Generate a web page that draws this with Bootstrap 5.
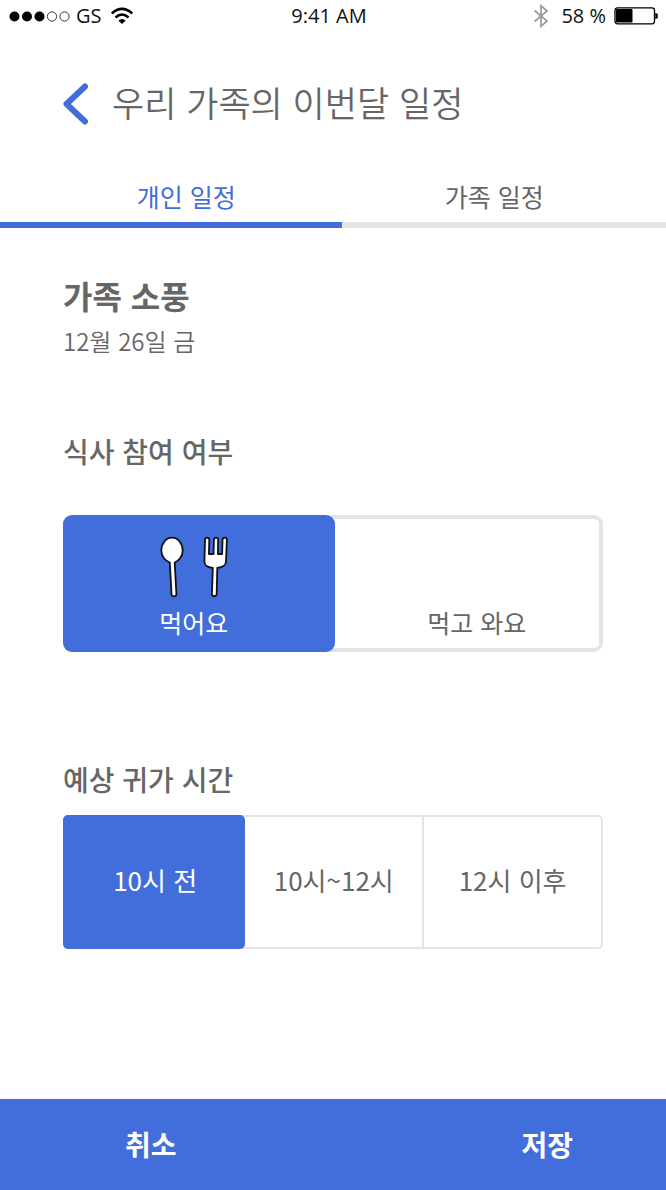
<!DOCTYPE html>
<html lang="ko">
<head>
<meta charset="utf-8">
<meta name="viewport" content="width=device-width, initial-scale=1">
<title>우리 가족의 이번달 일정</title>
<link href="https://cdn.jsdelivr.net/npm/bootstrap@5.3.0/dist/css/bootstrap.min.css" rel="stylesheet">
<style>
:root { --brand: #416edb; --ink: #666; --line: #e4e4e4; }
body { font-family: "Noto Sans CJK KR", sans-serif; color: var(--ink); background: #fff; line-height: 1.5; }
.status { font-family: "Open Sans", "Noto Sans CJK KR", sans-serif; font-size: 20px; line-height: 32px; color: #111; padding: 0 8px; }
.status > div { flex: 1 1 0; }
.status .clock { padding-right: 8px; }
.topbar { padding: 44px 63px 0; gap: 24px; }
.topbar h1 { font-size: 35px; font-weight: 350; line-height: 52px; padding-bottom: 4px; }
.back { line-height: 0; }
.tabs { margin-top: 44px; }
.tabs button { font-size: 25px; font-weight: 400; line-height: 40px; padding: 0 20px 6px 0; flex: 0 0 48.6%; color: var(--ink); border: 0; border-bottom: 6px solid var(--line); background: none; }
.tabs button.active { flex: 1 1 0; padding: 0 0 6px 30px; color: var(--brand); border-color: var(--brand); }
.content { padding: 43px 63px 56px; }
.event-name { font-size: 32px; font-weight: 700; line-height: 48px; }
.event-date { font-size: 24px; font-weight: 350; line-height: 44px; }
.section-title { font-size: 28px; font-weight: 500; line-height: 40px; }
.event { margin-bottom: 68px; }
.meal { margin-bottom: 107px; }
.choices { border: 2px solid var(--line); border-radius: 5px; font-size: 26px; }
.choices.thick { border-width: 4px; border-radius: 9px; font-size: 25px; margin-top: 44px; }
.choices label { flex: 1 1 0; cursor: pointer; height: 130px; line-height: 32px; padding-bottom: 4px; border-left: 2px solid var(--line); }
.choices.thick label { height: 129px; border-left: 0; padding: 0 0 10px 24px; }
.choices .btn-check:checked + label { position: relative; background: var(--brand); border-color: var(--brand); color: #fff; border-radius: 5px; margin: -2px; height: 134px; padding-bottom: 4px; flex-grow: 1.02; }
.choices.thick .btn-check:checked + label { border-radius: 9px; margin: -4px; height: 137px; padding: 0 10px 14px 0; flex-grow: 1.07; }
.choices .btn-check:checked + label + input + label { border-left-color: transparent; }
.btn-check:focus-visible + label { outline: 3px solid #9db7f5; }
.actions { background: var(--brand); padding: 0 93px 0 125px; }
.actions button { color: #fff; font-size: 28px; font-weight: 700; line-height: 91px; }
</style>
</head>
<body class="d-flex flex-column min-vh-100">
<div class="status d-flex align-items-center">
  <div class="d-flex align-items-center">
    <svg width="64" height="16" viewBox="0 0 64 16" aria-hidden="true">
      <g fill="#000"><circle cx="6.5" cy="8.500" r="5"/><circle cx="19" cy="8.500" r="5"/><circle cx="31.500" cy="8.500" r="5"/></g>
      <g fill="none" stroke="#333"><circle cx="44" cy="8.500" r="4.600"/><circle cx="56.500" cy="8.500" r="4.600"/></g>
    </svg>
    <span class="ms-1">GS</span>
    <svg class="ms-2" width="24" height="18" viewBox="0 0 24 18" aria-hidden="true">
      <g fill="none" stroke="#000" stroke-width="2.600"><path d="M1.800 6.500Q12-2.600 22.200 6.500"/><path d="M5.500 10.500Q12 4.500 18.500 10.500"/></g>
      <path d="M8.300 13.500Q12 10.400 15.700 13.500L12 17z"/>
    </svg>
  </div>
  <div class="clock text-center">9:41 AM</div>
  <div class="d-flex align-items-center justify-content-end">
    <svg width="16" height="24" viewBox="0 0 16 24" fill="none" stroke="#999" stroke-width="1.700" aria-hidden="true"><path d="M1.500 6.500L14 17 8 22.300V1.700L14 7 1.500 17.500"/></svg>
    <span class="ms-2 ps-1">58 %</span>
    <svg class="ms-2" width="44" height="18" viewBox="0 0 44 18" aria-hidden="true"><rect x="1" y=".800" width="39.500" height="16" rx="2.500" fill="none" stroke="#000" stroke-width="1.300"/><rect x="2" y="2" width="16.500" height="13.600" rx="1"/><path d="M41.300 6Q44 6 44 9t-2.700 3z"/></svg>
  </div>
</div>

<header class="topbar d-flex align-items-center">
  <button type="button" class="back btn p-0 border-0" aria-label="뒤로">
    <svg width="25" height="42" viewBox="0 0 25 42" fill="none" stroke="#416edb" stroke-width="6" stroke-linecap="round" stroke-linejoin="round"><path d="M22 3.500L3.500 21 22 38.500"/></svg>
  </button>
  <h1 class="m-0">우리 가족의 이번달 일정</h1>
</header>

<nav class="tabs d-flex" role="tablist">
  <button type="button" class="active" role="tab" aria-selected="true">개인 일정</button>
  <button type="button" role="tab" aria-selected="false">가족 일정</button>
</nav>

<main class="content">
  <section class="event">
    <h2 class="event-name m-0">가족 소풍</h2>
    <p class="event-date m-0">12월 26일 금</p>
  </section>

  <section class="meal">
    <h3 class="section-title m-0" id="meal-title">식사 참여 여부</h3>
    <div class="choices thick d-flex" role="radiogroup" aria-labelledby="meal-title">
      <input class="btn-check" type="radio" name="meal" id="meal-home" checked>
      <label for="meal-home" class="d-flex flex-column align-items-center justify-content-end">
        <svg class="mb-2" width="68" height="62" viewBox="0 0 68 62" fill="#fff" stroke="#111" stroke-width="1.800" stroke-linejoin="round" aria-hidden="true">
          <path d="M9.800 26.500C5 24.800 1.300 20 1.300 14.500 1.300 7.500 6 1.700 12 1.700S22.700 7.500 22.700 14.500c0 5.300-3.300 10.300-8 12l1.700 31.500c0 3.200-4.800 3.200-4.900 0z"/>
          <path d="M45 4c0-3.200 4.300-3.200 4.300 0l-.4 14h4.600l.4-14c0-3.200 4.300-3.200 4.300 0l-.3 14h4.200l.4-14c0-3.200 4.400-3.200 4.400 0l-.9 21.500c0 3.700-4 6-8.700 6.300L56.700 58c-.1 3-4.800 3-4.800 0l.9-26.200c-4.700-.3-8.500-2.600-8.400-6.300z"/>
        </svg>
        <span>먹어요</span>
      </label>
      <input class="btn-check" type="radio" name="meal" id="meal-out">
      <label for="meal-out" class="d-flex flex-column align-items-center justify-content-end"><span>먹고 와요</span></label>
    </div>
  </section>

  <section>
    <h3 class="section-title m-0" id="time-title">예상 귀가 시간</h3>
    <div class="choices d-flex mt-3" role="radiogroup" aria-labelledby="time-title">
      <input class="btn-check" type="radio" name="time" id="time-1" checked>
      <label for="time-1" class="d-flex align-items-center justify-content-center">10시 전</label>
      <input class="btn-check" type="radio" name="time" id="time-2">
      <label for="time-2" class="d-flex align-items-center justify-content-center">10시~12시</label>
      <input class="btn-check" type="radio" name="time" id="time-3">
      <label for="time-3" class="d-flex align-items-center justify-content-center">12시 이후</label>
    </div>
  </section>
</main>

<footer class="actions d-flex justify-content-between mt-auto">
  <button type="button" class="btn p-0 border-0">취소</button>
  <button type="button" class="btn p-0 border-0">저장</button>
</footer>
<script src="https://cdn.jsdelivr.net/npm/bootstrap@5.3.0/dist/js/bootstrap.bundle.min.js"></script>
</body>
</html>
